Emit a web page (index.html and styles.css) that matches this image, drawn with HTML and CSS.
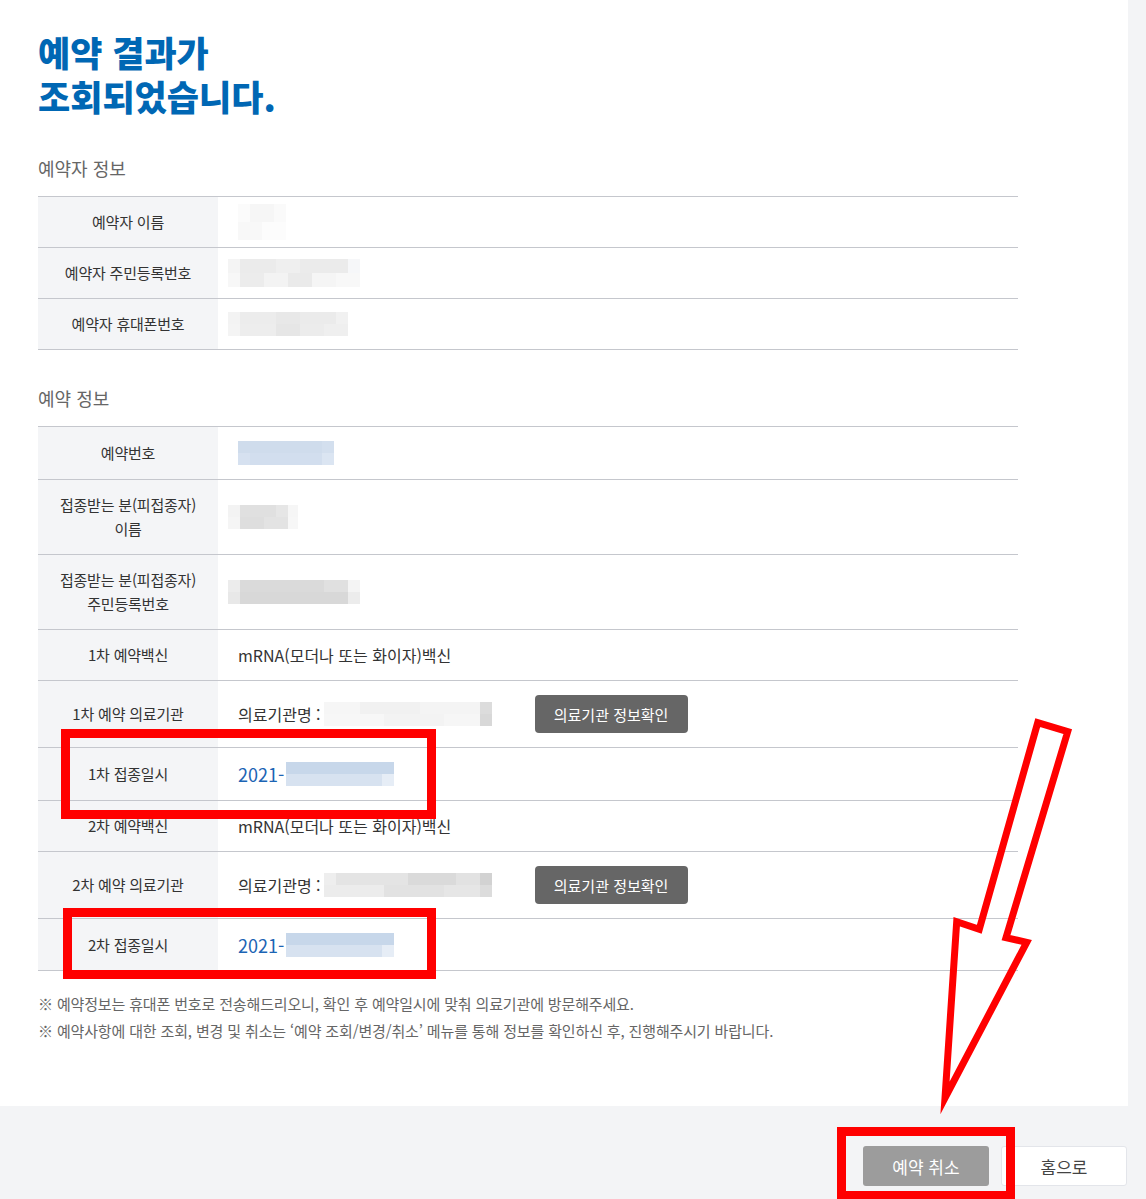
FILE: index.html
```html
<!DOCTYPE html>
<html lang="ko">
<head>
    <meta charset="UTF-8">
    <meta name="viewport" content="width=device-width, initial-scale=1.0">
    <title>예약 결과 조회</title>
    <link rel="stylesheet" href="styles.css">
</head>
<body>
    <div class="page">
        <main class="result">
            <h1 class="result-title"><span>예약 결과가</span><span>조회되었습니다.</span></h1>

            <section class="info-section">
                <h2 class="section-title">예약자 정보</h2>
                <div class="info-table">
                    <div class="info-row">
                        <div class="info-label">예약자 이름</div>
                        <div class="info-value"><span class="mosaic mosaic-faint"></span></div>
                    </div>
                    <div class="info-row">
                        <div class="info-label">예약자 주민등록번호</div>
                        <div class="info-value"><span class="mosaic mosaic-id shift"></span></div>
                    </div>
                    <div class="info-row">
                        <div class="info-label">예약자 휴대폰번호</div>
                        <div class="info-value"><span class="mosaic mosaic-phone shift"></span></div>
                    </div>
                </div>
            </section>

            <section class="info-section">
                <h2 class="section-title">예약 정보</h2>
                <div class="info-table">
                    <div class="info-row row-53">
                        <div class="info-label">예약번호</div>
                        <div class="info-value"><span class="mosaic mosaic-number"></span></div>
                    </div>
                    <div class="info-row">
                        <div class="info-label">접종받는 분(피접종자)<br>이름</div>
                        <div class="info-value"><span class="mosaic mosaic-short shift"></span></div>
                    </div>
                    <div class="info-row">
                        <div class="info-label">접종받는 분(피접종자)<br>주민등록번호</div>
                        <div class="info-value"><span class="mosaic mosaic-id2 shift"></span></div>
                    </div>
                    <div class="info-row">
                        <div class="info-label">1차 예약백신</div>
                        <div class="info-value">mRNA(모더나 또는 화이자)백신</div>
                    </div>
                    <div class="info-row row-67">
                        <div class="info-label">1차 예약 의료기관</div>
                        <div class="info-value">
                            의료기관명 :<span class="mosaic mosaic-org"></span>
                            <button class="btn-info">의료기관 정보확인</button>
                        </div>
                    </div>
                    <div class="info-row row-53">
                        <div class="info-label">1차 접종일시</div>
                        <div class="info-value date">2021-<span class="mosaic mosaic-date"></span></div>
                    </div>
                    <div class="info-row">
                        <div class="info-label">2차 예약백신</div>
                        <div class="info-value">mRNA(모더나 또는 화이자)백신</div>
                    </div>
                    <div class="info-row row-67">
                        <div class="info-label">2차 예약 의료기관</div>
                        <div class="info-value">
                            의료기관명 :<span class="mosaic mosaic-org dark"></span>
                            <button class="btn-info">의료기관 정보확인</button>
                        </div>
                    </div>
                    <div class="info-row row-52">
                        <div class="info-label">2차 접종일시</div>
                        <div class="info-value date">2021-<span class="mosaic mosaic-date"></span></div>
                    </div>
                </div>
            </section>

            <div class="notice">
                <p>※ 예약정보는 휴대폰 번호로 전송해드리오니, 확인 후 예약일시에 맞춰 의료기관에 방문해주세요.</p>
                <p>※ 예약사항에 대한 조회, 변경 및 취소는 ‘예약 조회/변경/취소’ 메뉴를 통해 정보를 확인하신 후, 진행해주시기 바랍니다.</p>
            </div>
        </main>

        <footer class="action-bar">
            <button class="btn btn-cancel">예약 취소</button>
            <button class="btn btn-home">홈으로</button>
        </footer>
    </div>

    <!-- red annotation marks drawn over the page -->
    <svg class="marks" width="1146" height="1199" viewBox="0 0 1146 1199" aria-hidden="true">
        <g fill="none" stroke="#ff0000" stroke-width="9">
            <rect x="65.5" y="733.5" width="366" height="81"/>
            <rect x="67.5" y="912.5" width="364" height="62"/>
            <rect x="841.5" y="1131.5" width="169" height="64"/>
        </g>
        <polygon fill="none" stroke="#ff0000" stroke-width="7" stroke-miterlimit="10"
                 points="1037.7,722.7 1067.7,731.7 1006,937.7 1026.7,942.3 945,1098 956.7,921.7 979.3,929.3"/>
    </svg>
</body>
</html>
```

FILE: styles.css
```css
:root {
    --title-color: #0067b4;
    --label-bg: #f4f5f7;
    --line-color: #c5c7cd;
    --text-color: #333;
    --muted: #666;
    --page-bg: #f3f4f6;
}

* {
    margin: 0;
    padding: 0;
    box-sizing: border-box;
    font-family: "Noto Sans CJK KR", "Noto Sans", sans-serif;
}

body {
    position: relative;
    background-color: var(--page-bg);
    color: var(--text-color);
    width: 1146px;
    min-height: 1199px;
    overflow: hidden;
}

.page {
    width: 1128px;
}

.result {
    background-color: #fff;
    min-height: 1106px;
    padding: 30px 0 0 38px;
}

.result-title {
    color: var(--title-color);
    font-size: 35px;
    font-weight: 900;
    letter-spacing: 0;
}

.result-title span {
    display: block;
    height: 44px;
    line-height: 44px;
}

.info-section {
    width: 980px;
}

.section-title {
    margin-top: 38px;
    margin-bottom: 16px;
    font-size: 18px;
    line-height: 24px;
    font-weight: 400;
    color: var(--muted);
}

.info-section + .info-section .section-title {
    margin-top: 36px;
}

.info-table {
    border-top: 1px solid var(--line-color);
}

.info-row {
    display: grid;
    grid-template-columns: 180px 1fr;
    min-height: 51px;
    border-bottom: 1px solid var(--line-color);
}

.row-52 { min-height: 52px; }
.row-53 { min-height: 53px; }
.row-67 { min-height: 67px; }

.info-label {
    display: flex;
    align-items: center;
    justify-content: center;
    text-align: center;
    background-color: var(--label-bg);
    font-size: 15px;
    line-height: 24px;
    padding: 13px 6px;
    color: var(--text-color);
    letter-spacing: -0.2px;
}

.info-value {
    display: flex;
    align-items: center;
    padding: 0 20px;
    font-size: 16px;
    color: var(--text-color);
}

.info-value.date {
    color: #1c64b4;
    font-size: 18px;
}

.btn-info {
    margin-left: 43px;
    width: 153px;
    height: 38px;
    border: none;
    border-radius: 4px;
    background-color: #666;
    color: #fff;
    font-size: 15px;
    cursor: pointer;
}

/* blurred personal data */
.mosaic {
    display: inline-block;
    height: 24px;
    background-repeat: no-repeat;
    background-size: 100% 50%;
    background-position: top, bottom;
}

.mosaic.shift {
    margin-left: -10px;
}

.mosaic-faint {
    width: 48px;
    height: 36px;
    background-image:
        linear-gradient(90deg, #fbfbfb 0 12px, #f6f6f6 12px 36px, #fafafa 36px),
        linear-gradient(90deg, #f8f8f8 0 24px, #fcfcfc 24px);
}

.mosaic-id {
    width: 132px;
    height: 28px;
    background-image:
        linear-gradient(90deg, #f4f4f4 0 12px, #ebebeb 12px 48px, #efefef 48px 72px, #ebebeb 72px 120px, #f6f7f9 120px),
        linear-gradient(90deg, #f7f7f7 0 12px, #ececec 12px 36px, #f3f3f3 36px 60px, #eaeaea 60px 84px, #f5f5f5 84px 108px, #f8f8f8 108px);
}

.mosaic-phone {
    width: 120px;
    background-image:
        linear-gradient(90deg, #f3f3f3 0 12px, #ececec 12px 48px, #e8e8e8 48px 72px, #ebebeb 72px 108px, #f1f1f1 108px),
        linear-gradient(90deg, #f4f4f4 0 12px, #ededed 12px 48px, #e6e6e6 48px 72px, #ececec 72px 96px, #efefef 96px);
}

.mosaic-number {
    width: 96px;
    background-image:
        linear-gradient(90deg, #cfdcec 0 84px, #d3dfee 84px),
        linear-gradient(90deg, #d6e1f0 0 12px, #d2deee 12px 84px, #dbe5f2 84px);
}

.mosaic-short {
    width: 70px;
    background-image:
        linear-gradient(90deg, #f3f3f3 0 12px, #e0e0e0 12px 48px, #e6e6e6 48px 60px, #f6f6f6 60px),
        linear-gradient(90deg, #f5f5f5 0 12px, #dedede 12px 36px, #e3e3e3 36px 60px, #f7f7f7 60px);
}

.mosaic-id2 {
    width: 132px;
    background-image:
        linear-gradient(90deg, #ececec 0 12px, #dadada 12px 96px, #e0e0e0 96px 120px, #f4f4f4 120px),
        linear-gradient(90deg, #e8e8e8 0 12px, #d8d8d8 12px 120px, #ececec 120px);
}

.mosaic-org {
    width: 168px;
    margin-left: 3px;
    background-image:
        linear-gradient(90deg, #f6f6f6 0 36px, #f1f1f1 36px 96px, #f4f4f4 96px 156px, #dcdcdc 156px),
        linear-gradient(90deg, #f7f7f7 0 60px, #f3f3f3 60px 120px, #f6f6f6 120px 156px, #d8d8d8 156px);
}

.mosaic-org.dark {
    background-image:
        linear-gradient(90deg, #eeeeee 0 12px, #e4e4e4 12px 84px, #dadada 84px 132px, #e2e2e2 132px 156px, #d2d2d2 156px),
        linear-gradient(90deg, #ececec 0 60px, #e2e2e2 60px 120px, #e6e6e6 120px 156px, #dcdcdc 156px);
}

.mosaic-date {
    width: 108px;
    margin-left: 2px;
    background-image:
        linear-gradient(90deg, #c7d7ea 0 108px),
        linear-gradient(90deg, #d7e2f0 0 96px, #e6edf6 96px);
}

.notice {
    margin-top: 19px;
    font-size: 15px;
    line-height: 27px;
    color: var(--muted);
    letter-spacing: -0.15px;
}

.action-bar {
    display: flex;
    justify-content: flex-end;
    gap: 12px;
    padding: 40px 1px 0 0;
}

.btn {
    width: 126px;
    height: 40px;
    border-radius: 3px;
    font-size: 17px;
    cursor: pointer;
}

.btn-cancel {
    border: none;
    background-color: #9c9c9c;
    color: #fff;
}

.btn-home {
    border: 1px solid #e3e5ea;
    background-color: #fff;
    color: #444;
}

.marks {
    position: absolute;
    top: 0;
    left: 0;
    pointer-events: none;
}
```
